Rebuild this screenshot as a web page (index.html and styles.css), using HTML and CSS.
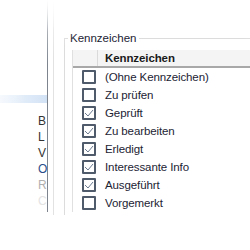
FILE: index.html
```html
<!DOCTYPE html>
<html lang="de">
<head>
    <meta charset="UTF-8">
    <title>Kennzeichen</title>
    <link rel="stylesheet" href="styles.css">
</head>
<body>
    <div class="scene">
        <!-- faded dialog behind the lens -->
        <div class="backdrop">
            <div class="band"></div>
            <div class="letters">
                <span>B</span>
                <span>L</span>
                <span>V</span>
                <span class="blue">O</span>
                <span class="faint">R</span>
                <span class="fainter">C</span>
            </div>
        </div>

        <div class="panel">
            <div class="rule"></div>
            <fieldset class="group">
                <legend>Kennzeichen</legend>
                <div class="list">
                    <div class="list-head">
                        <div class="col-check"></div>
                        <div class="col-title">Kennzeichen</div>
                    </div>
                    <div class="list-body" id="list-body"></div>
                </div>
            </fieldset>
        </div>

        <div class="glare"></div>
    </div>

    <script>
        // flag rows
        const flags = [
            ['(Ohne Kennzeichen)', false],
            ['Zu prüfen', false],
            ['Geprüft', true],
            ['Zu bearbeiten', true],
            ['Erledigt', true],
            ['Interessante Info', true],
            ['Ausgeführt', true],
            ['Vorgemerkt', false]
        ];

        const listBody = document.getElementById('list-body');
        const tick = '<svg width="10" height="8" viewBox="0 0 10 8"><path d="M1 4 L4 7 L9 1" fill="none" stroke="#6b7a8f" stroke-width="1"/></svg>';

        flags.forEach(([label, checked]) => {
            const row = document.createElement('div');
            row.className = 'row';
            row.innerHTML = '<div class="col-check"><span class="box">' + (checked ? tick : '') + '</span></div>' +
                '<div class="col-title">' + label + '</div>';
            listBody.appendChild(row);
        });
    </script>
</body>
</html>
```

FILE: styles.css
```css
body {
    margin: 0;
    background-color: white;
    font-family: "Liberation Sans", Arial, sans-serif;
    font-size: 11.5px;
    color: #1c2333;
}
.scene {
    position: relative;
    width: 250px;
    height: 250px;
    overflow: hidden;
    display: flex;
}
.backdrop {
    width: 47px;
    border-right: 1px solid #7d848e;
    margin-bottom: 38px;
    overflow: hidden;
    display: flex;
    flex-direction: column;
}
.band {
    height: 8px;
    margin-top: 95px;
    background: linear-gradient(to right, #f2f7fd, #d2e2f5);
}
.letters {
    display: flex;
    flex-direction: column;
    margin-top: 10px;
    padding-left: 38px;
    color: #333;
    font-size: 12px;
    line-height: 16px;
}
.letters .blue {
    color: #2a4d8a;
}
.letters .faint {
    color: #b0b0b0;
}
.letters .fainter {
    color: #e4e4e4;
}
.panel {
    flex: 1;
    display: flex;
    margin-bottom: 35px;
}
.rule {
    width: 5px;
    border-right: 1px solid #e2e2e2;
}
.group {
    margin: 32px 0 0 10px;
    padding: 6px 0 0 7px;
    border: none;
    border-top: 1px solid #dcdcdc;
    border-left: 1px solid #dcdcdc;
    min-width: 0;
    flex: 1;
}
.group legend {
    padding: 0 2px;
    margin-left: -4px;
    color: #1c2333;
}
.list {
    border-left: 1px solid #e0e0e0;
}
.list-head {
    display: flex;
    height: 16px;
    align-items: center;
    background-color: #f4f4f4;
    border-bottom: 2px solid #a8a8a8;
    font-weight: bold;
    color: #1a1a1a;
}
.list-head .col-check {
    align-self: stretch;
    border-right: 1px solid #dadada;
}
.col-check {
    width: 25px;
    flex-shrink: 0;
    box-sizing: border-box;
    padding-right: 2px;
    display: flex;
    justify-content: flex-end;
}
.col-title {
    padding-left: 7px;
    white-space: nowrap;
    letter-spacing: -0.1px;
}
.row {
    display: flex;
    align-items: center;
    height: 18px;
}
.box {
    width: 10px;
    height: 10px;
    border: 2px solid #4f5b6b;
    border-radius: 1px;
    background-color: white;
    display: flex;
    align-items: center;
    justify-content: center;
}
.glare {
    position: absolute;
    inset: 0;
    pointer-events: none;
    background:
        linear-gradient(to bottom, white 0, rgba(255, 255, 255, 0) 32px),
        radial-gradient(ellipse 210px 190px at 160px 150px, rgba(255, 255, 255, 0) 70%, rgba(255, 255, 255, 0.85) 100%);
}
```
